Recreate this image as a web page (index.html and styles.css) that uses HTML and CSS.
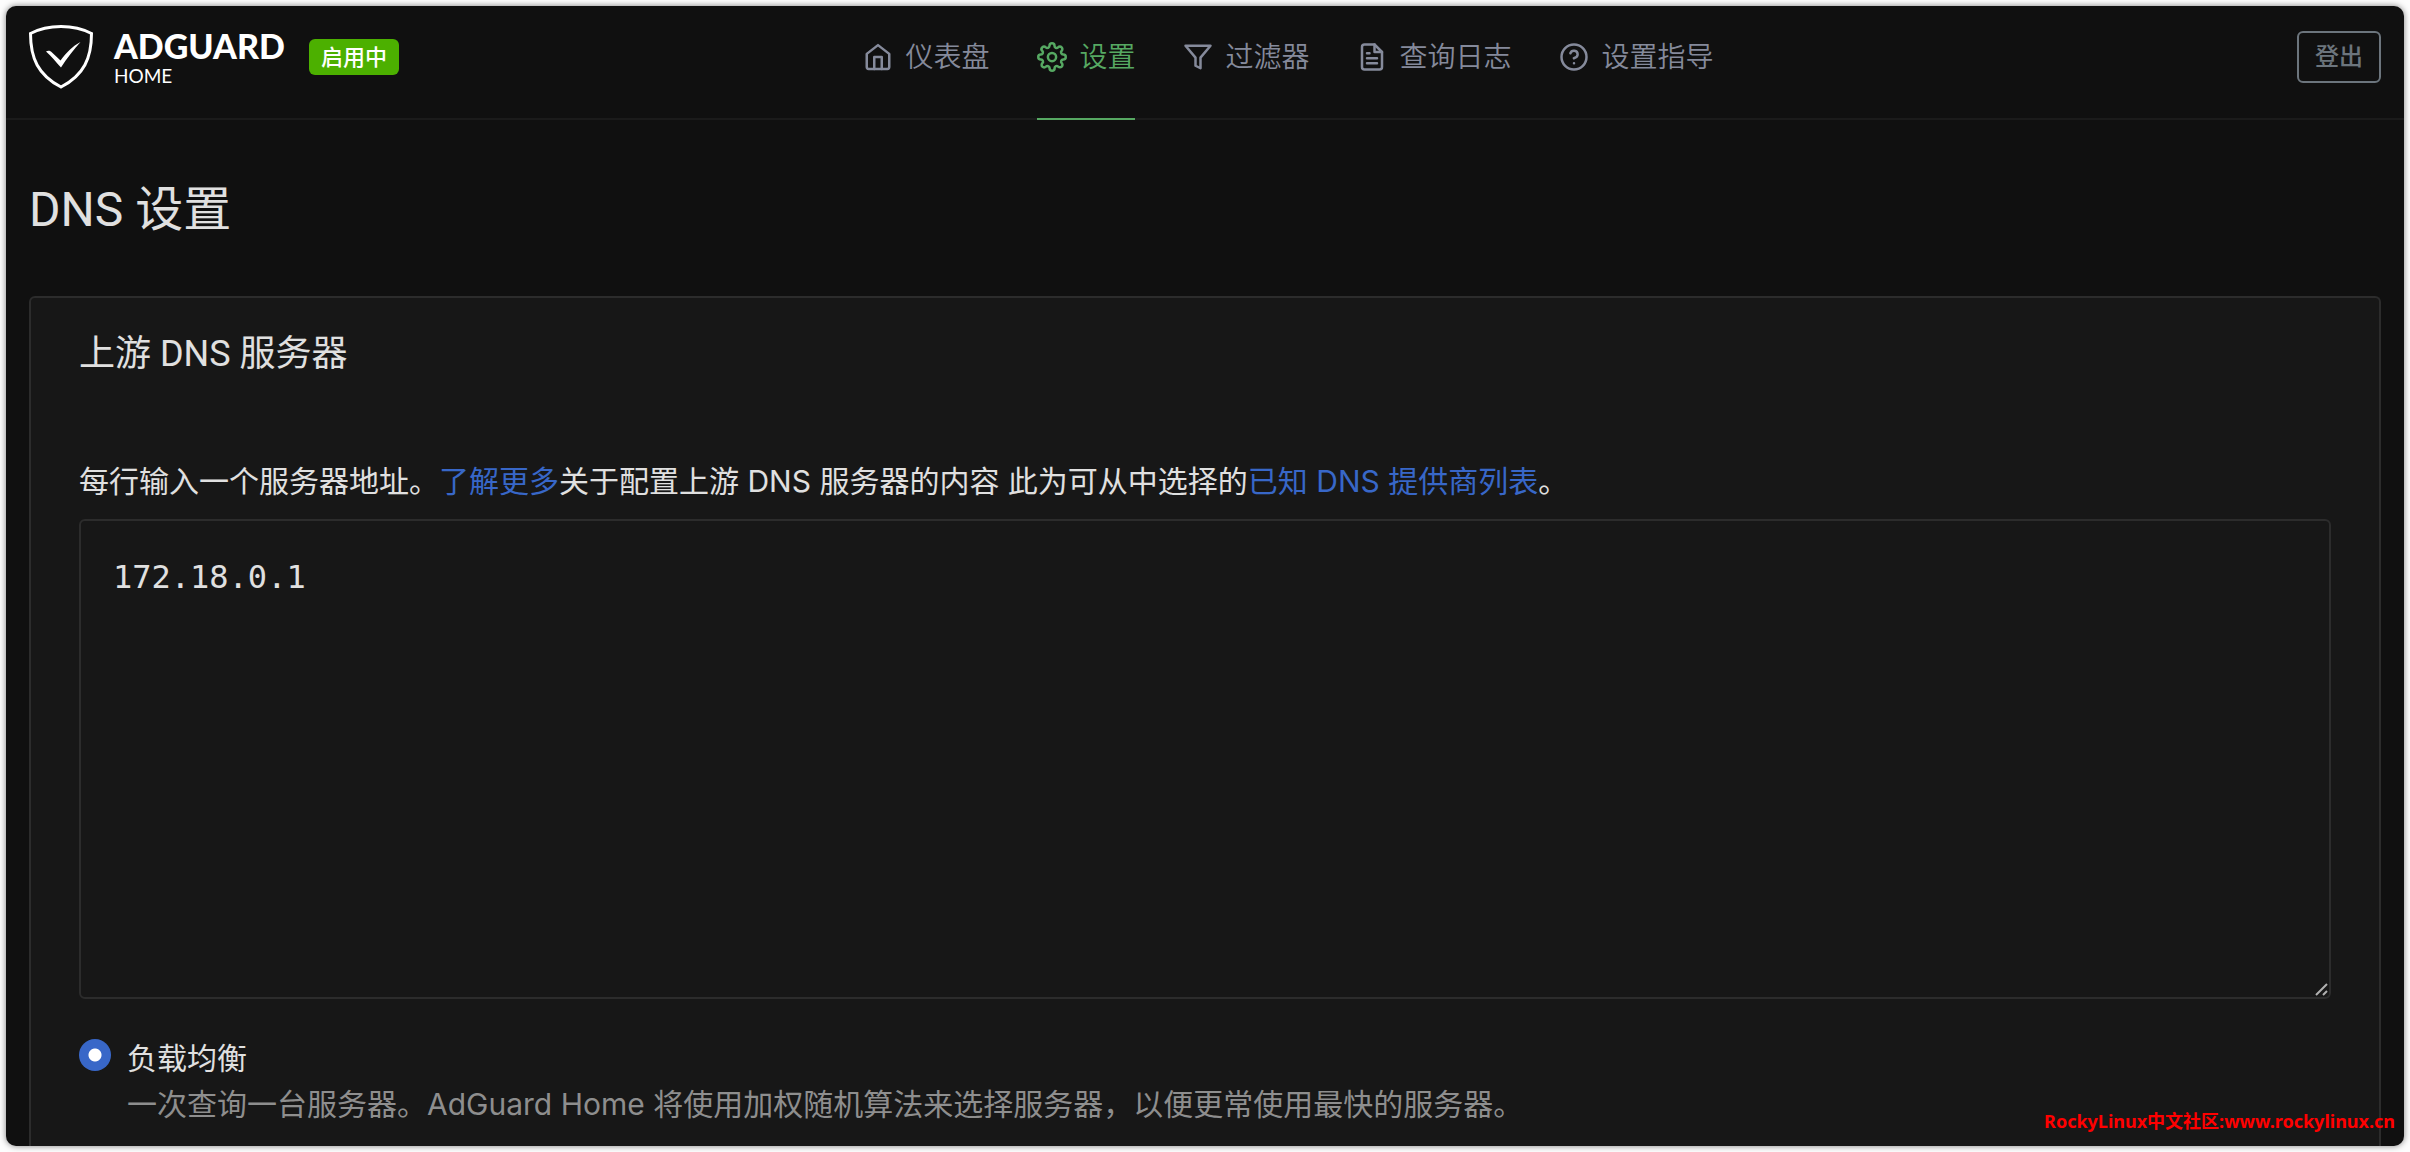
FILE: index.html
```html
<!DOCTYPE html>
<html lang="zh-CN">
<head>
    <meta charset="UTF-8">
    <meta name="viewport" content="width=device-width, initial-scale=1.0">
    <title>AdGuard Home</title>
    <link rel="stylesheet" href="styles.css">
</head>
<body>
    <div class="window">
        <header class="header">
            <div class="brand">
                <a class="brand-link" href="#">
                    <svg class="brand-shield" viewBox="0 0 64 64" fill="none">
                        <path d="M32 1.5C22 1.5 10 4 1.5 8.5C1.5 33 9 50 32 62C55 50 62.500 33 62.500 8.500C54 4 42 1.500 32 1.500Z" stroke="#fff" stroke-width="3"/>
                        <path d="M17 26.500C19 25 21.500 25.500 23 27.500L31.500 35.500C37 28 43.500 21 51.500 17C45 24.500 38 33 32 42.500C27 37 22.500 31.500 17 26.500Z" fill="#fff"/>
                    </svg>
                    <span class="brand-text">
                        <span class="brand-name">ADGUARD</span>
                        <span class="brand-sub">HOME</span>
                    </span>
                </a>
                <span class="badge">启用中</span>
            </div>
            <nav class="nav">
                <a class="nav-item" href="#">
                    <svg class="nav-icon" viewBox="0 0 24 24">
                        <path d="M3 9.500L12 2.500l9 7V20a1.500 1.500 0 0 1-1.500 1.500h-15A1.500 1.500 0 0 1 3 20z"/>
                        <path d="M9 21.500V12h6v9.500"/>
                    </svg>
                    <span>仪表盘</span>
                </a>
                <a class="nav-item active" href="#">
                    <svg class="nav-icon" viewBox="0 0 24 24">
                        <circle cx="12" cy="12" r="3.300"/>
                        <path d="M19.400 15a1.650 1.650 0 0 0 .33 1.820l.06.06a2 2 0 1 1-2.830 2.830l-.06-.06a1.650 1.650 0 0 0-2.820 1.180V21a2 2 0 0 1-4 0v-.09A1.650 1.650 0 0 0 9 19.400a1.650 1.650 0 0 0-1.820.33l-.06.06a2 2 0 1 1-2.830-2.830l.06-.06a1.650 1.650 0 0 0-1.180-2.820H3a2 2 0 0 1 0-4h.09A1.650 1.650 0 0 0 4.600 9a1.650 1.650 0 0 0-.33-1.820l-.06-.06a2 2 0 1 1 2.830-2.830l.06.06A1.650 1.650 0 0 0 9 4.600 1.650 1.650 0 0 0 10 3.090V3a2 2 0 0 1 4 0v.09a1.650 1.650 0 0 0 2.820 1.180l.06-.06a2 2 0 1 1 2.830 2.830l-.06.06A1.650 1.650 0 0 0 19.400 9a1.650 1.650 0 0 0 1.510 1H21a2 2 0 0 1 0 4h-.09a1.650 1.650 0 0 0-1.510 1z"/>
                    </svg>
                    <span>设置</span>
                </a>
                <a class="nav-item" href="#">
                    <svg class="nav-icon" viewBox="0 0 24 24">
                        <path d="M22 3H2l8 9.460V19l4 2v-8.540z"/>
                    </svg>
                    <span>过滤器</span>
                </a>
                <a class="nav-item" href="#">
                    <svg class="nav-icon" viewBox="0 0 24 24">
                        <path d="M14 2H6a2 2 0 0 0-2 2v16a2 2 0 0 0 2 2h12a2 2 0 0 0 2-2V8z"/>
                        <path d="M14 2v6h6M16 13H8M16 17H8M10 9H8"/>
                    </svg>
                    <span>查询日志</span>
                </a>
                <a class="nav-item" href="#">
                    <svg class="nav-icon" viewBox="0 0 24 24">
                        <circle cx="12" cy="12" r="10"/>
                        <path d="M9.090 9a3 3 0 0 1 5.830 1c0 2-3 3-3 3M12 17h.01"/>
                    </svg>
                    <span>设置指导</span>
                </a>
            </nav>
            <button class="logout" type="button">登出</button>
        </header>

        <main class="page">
            <h1 class="page-title">DNS 设置</h1>

            <section class="card">
                <h2 class="card-title">上游 DNS 服务器</h2>
                <form class="card-body">
                    <label class="intro" for="upstream">每行输入一个服务器地址。<a href="#">了解更多</a>关于配置上游 DNS 服务器的内容 此为可从中选择的<a href="#">已知 DNS 提供商列表</a>。</label>
                    <textarea class="upstream" id="upstream" spellcheck="false">172.18.0.1</textarea>

                    <div class="option">
                        <input class="radio" type="radio" name="mode" id="load-balance" checked>
                        <label class="option-text" for="load-balance">
                            <span class="option-name">负载均衡</span>
                            <span class="option-desc">一次查询一台服务器。AdGuard Home 将使用加权随机算法来选择服务器，以便更常使用最快的服务器。</span>
                        </label>
                    </div>
                </form>
            </section>
        </main>
        <div class="watermark">RockyLinux中文社区:www.rockylinux.cn</div>
    </div>
</body>
</html>
```
FILE: styles.css
```css
* {
    box-sizing: border-box;
    margin: 0;
    padding: 0;
}

body {
    height: 100vh;
    padding: 6px;
    background-color: #fdfdfd;
    color: #e0e0e0;
    font-family: Inter, "Noto Sans CJK SC", sans-serif;
    font-size: 30px;
    font-weight: 400;
    line-height: 46px;
    overflow: hidden;
}

a {
    color: #3867c8;
    text-decoration: none;
}

.window {
    position: relative;
    display: flex;
    flex-direction: column;
    height: 100%;
    background-color: #101010;
    border-radius: 10px;
    box-shadow: 0 0 6px rgba(0, 0, 0, 0.5);
    overflow: hidden;
}

/* header */
.header {
    display: grid;
    grid-template-columns: 5fr auto 4fr;
    flex-shrink: 0;
    height: 114px;
    padding: 0 23px;
    border-bottom: 2px solid #1b1b1b;
}

.brand {
    display: flex;
    align-items: center;
    gap: 24px;
    padding-bottom: 10px;
}

.brand-link {
    display: flex;
    align-items: center;
    gap: 21px;
    color: #fff;
    font-family: Lato, sans-serif;
}

.brand-shield {
    width: 64px;
    height: 64px;
}

.brand-text {
    display: flex;
    flex-direction: column;
    padding-top: 6px;
}

.brand-name {
    font-size: 34px;
    font-weight: 900;
    line-height: 32px;
}

.brand-sub {
    font-size: 19px;
    font-weight: 400;
    line-height: 28px;
}

.badge {
    padding: 0 12px;
    border-radius: 6px;
    background-color: #4cb000;
    color: #fff;
    font-size: 22px;
    font-weight: 500;
    line-height: 36px;
}

.nav {
    display: flex;
    gap: 48px;
    margin-bottom: -2px;
}

.nav-item {
    display: flex;
    align-items: center;
    gap: 12px;
    padding-bottom: 10px;
    border-bottom: 2px solid transparent;
    color: #858a9b;
    font-size: 28px;
    font-weight: 350;
}

.nav-item.active {
    color: #56a862;
    border-color: #56a862;
}

.nav-icon {
    width: 30px;
    height: 30px;
    fill: none;
    stroke: currentColor;
    stroke-width: 2;
    stroke-linecap: round;
    stroke-linejoin: round;
    overflow: visible;
}

.logout {
    justify-self: end;
    align-self: start;
    height: 52px;
    margin-top: 25px;
    padding: 0 16px;
    border: 2px solid #6c757d;
    border-radius: 6px;
    background: none;
    color: #6c757d;
    font: inherit;
    font-size: 24px;
    font-weight: 500;
}

/* page */
.page {
    display: flex;
    flex-direction: column;
    flex-grow: 1;
    min-height: 0;
    padding: 0 23px;
}

.page-title {
    padding: 60px 0 56px;
    font-family: Roboto, "Noto Sans CJK SC", sans-serif;
    font-size: 48px;
    font-weight: 400;
    line-height: 60px;
}

.card {
    flex-grow: 1;
    border: 2px solid #2c2c2c;
    border-bottom: 0;
    border-radius: 6px 6px 0 0;
    background-color: #171717;
}

.card-title {
    padding: 0 48px;
    font-family: Roboto, "Noto Sans CJK SC", sans-serif;
    font-size: 36px;
    font-weight: 400;
    line-height: 112px;
}

.card-body {
    padding: 48px;
}

.intro {
    display: block;
    margin-bottom: 15px;
}

.upstream {
    display: block;
    width: 100%;
    height: 480px;
    padding: 32px;
    border: 2px solid #2c2c2c;
    border-radius: 6px;
    outline: none;
    background-color: #171717;
    color: #e0e0e0;
    font-family: "DejaVu Sans Mono", monospace;
    font-size: 32px;
    line-height: 48px;
    resize: vertical;
}

.upstream::-webkit-resizer {
    background: url("data:image/svg+xml,%3Csvg xmlns='http://www.w3.org/2000/svg' width='15' height='15' stroke='%23b0b0b0' stroke-width='2'%3E%3Cpath d='M2 13L13 2M9 13L13 9'/%3E%3C/svg%3E") no-repeat;
}

.option {
    display: flex;
    gap: 16px;
    margin-top: 36px;
}

.radio {
    flex-shrink: 0;
    appearance: none;
    width: 32px;
    height: 32px;
    margin-top: 4px;
    border-radius: 50%;
    background-color: #3867c8;
}

.radio:checked {
    background-image: radial-gradient(circle, #fff 6px, transparent 7px);
}

.option-text {
    display: flex;
    flex-direction: column;
}

.option-desc {
    color: #8e8e8e;
}

.watermark {
    position: absolute;
    right: 9px;
    bottom: 11px;
    color: #f00;
    font-family: "Noto Sans", "Noto Sans CJK SC", sans-serif;
    font-size: 18px;
    font-weight: 700;
    line-height: 28px;
}
```
